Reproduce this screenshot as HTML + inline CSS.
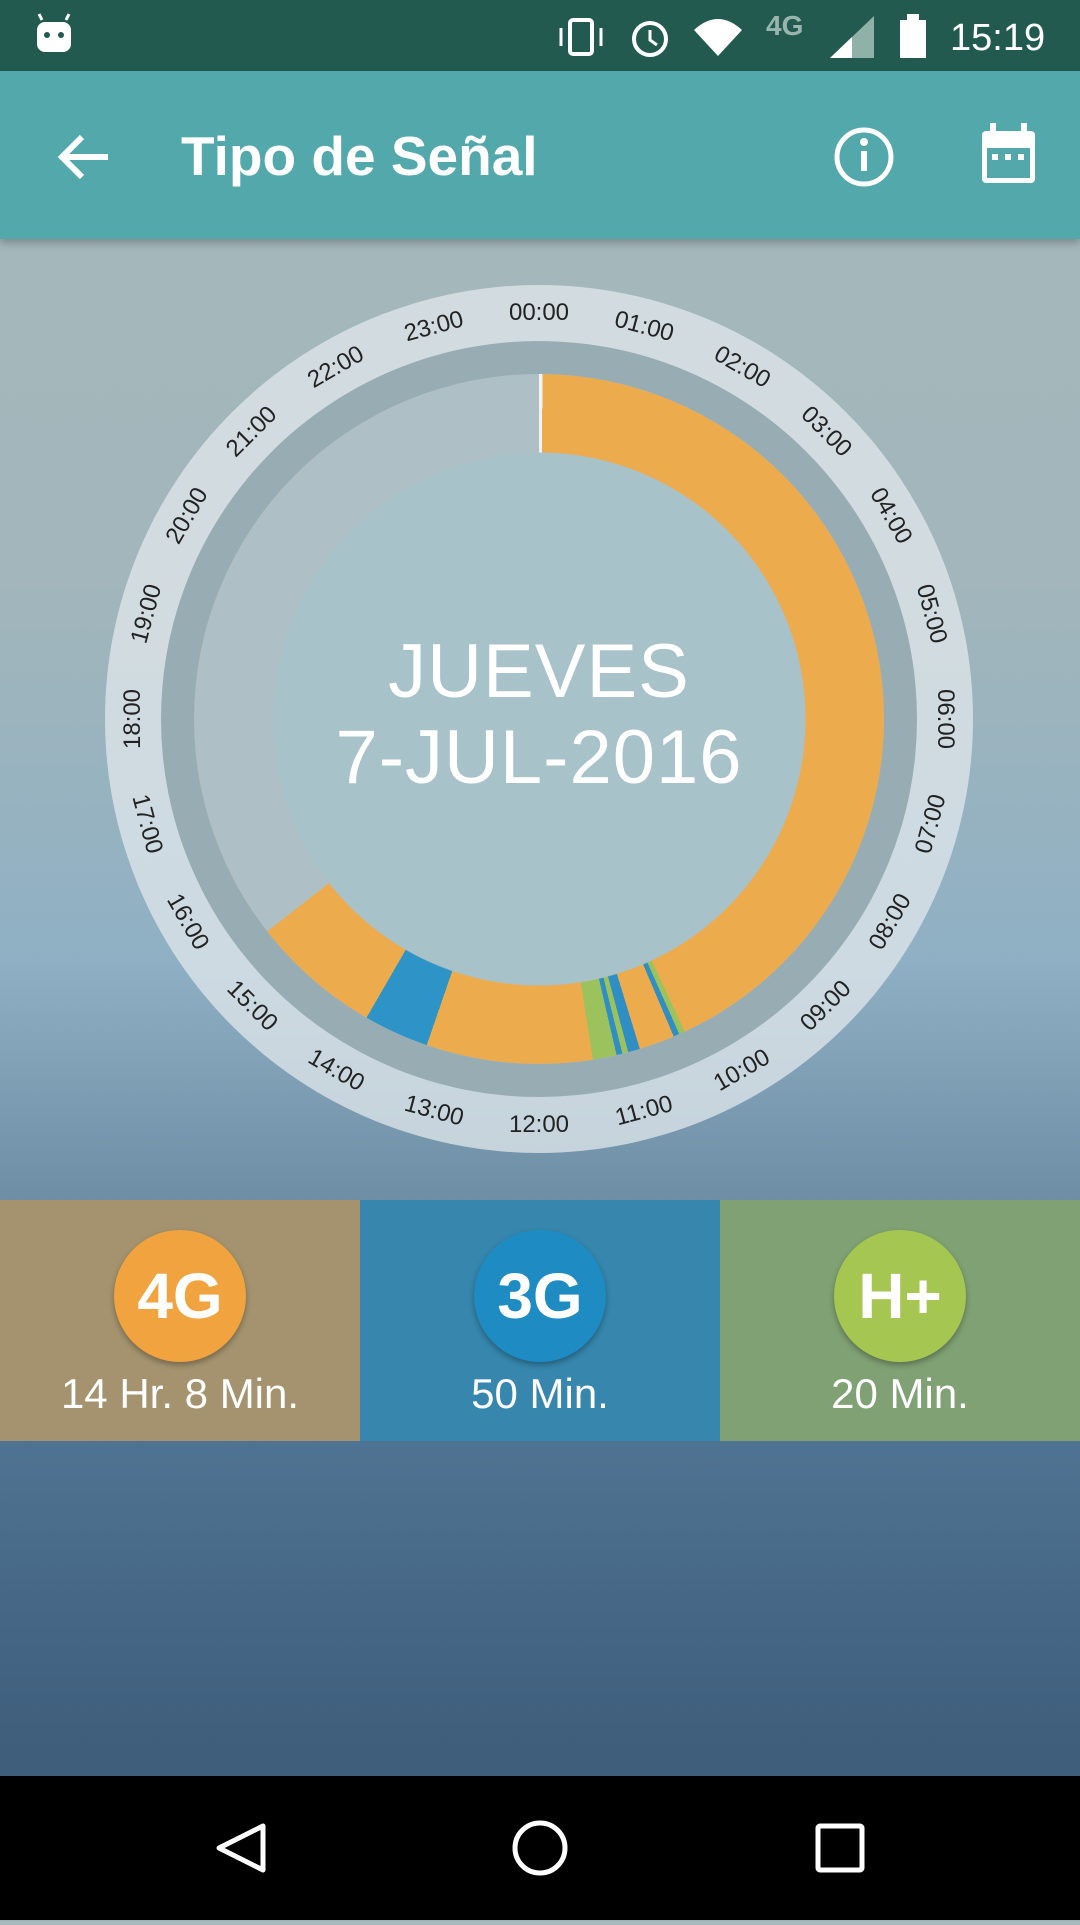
<!DOCTYPE html>
<html><head><meta charset="utf-8"><style>
*{margin:0;padding:0;box-sizing:border-box}
body{width:1080px;height:1920px;overflow:hidden;font-family:"Liberation Sans",sans-serif;position:relative;
background:linear-gradient(180deg,#a6b8ba 0%,#a2b6bb 30%,#8fb0c4 50%,#6f8fa6 62%,#4f7392 75%,#3f5f7d 90%,#3d5a78 100%)}
.status{position:absolute;top:0;left:0;width:1080px;height:71px;background:#225a50;color:#fff}
.bar{position:absolute;top:71px;left:0;width:1080px;height:168px;background:#52a8aa;box-shadow:0 4px 8px rgba(0,0,0,.25)}
.title{position:absolute;left:181px;top:124px;font-size:55px;font-weight:bold;color:#fff}
.dial{position:absolute;left:539px;top:719px;width:0;height:0}
.c{position:absolute;border-radius:50%}
.lbl{position:absolute;left:-40px;top:-14px;width:80px;text-align:center;font-size:24px;color:#222;line-height:28px}
.donut{position:absolute;left:-345px;top:-345px;width:690px;height:690px;border-radius:50%;
background:conic-gradient(#f2f2f2 0deg 0.6deg,#ecab4d 0.6deg 155deg,#9bc25d 155deg 156deg,#2f8fc4 156deg 157deg,#ecab4d 157deg 163deg,#2f8fc4 163deg 165deg,#9bc25d 165deg 166deg,#2f8fc4 166deg 167deg,#9bc25d 167deg 171deg,#ecab4d 171deg 199deg,#2e93c7 199deg 210deg,#ecab4d 210deg 232deg,transparent 232deg 360deg);
-webkit-mask:radial-gradient(circle,transparent 266px,#000 267px);mask:radial-gradient(circle,transparent 266px,#000 267px)}
.tile{position:absolute;top:1200px;width:360px;height:241px;color:#fff;text-align:center}
.badge{position:absolute;left:114px;top:30px;width:132px;height:132px;border-radius:50%;font-size:64px;font-weight:bold;line-height:132px;box-shadow:0 3px 6px rgba(0,0,0,.3)}
.tl{position:absolute;top:170px;width:100%;font-size:42px;font-weight:300}
.nav{position:absolute;top:1776px;left:0;width:1080px;height:144px;background:#000}
</style></head><body>
<div class="status">
 <svg width="1080" height="71" style="position:absolute;left:0;top:0">
  <rect x="37" y="22" width="34" height="30" rx="8" fill="#fff"/><circle cx="47" cy="35" r="3" fill="#225a50"/><circle cx="61" cy="35" r="3" fill="#225a50"/>
  <line x1="42" y1="20" x2="39" y2="14" stroke="#fff" stroke-width="3"/><line x1="66" y1="20" x2="69" y2="14" stroke="#fff" stroke-width="3"/>
  <rect x="570" y="20" width="22" height="34" rx="3" fill="none" stroke="#fff" stroke-width="4"/><line x1="561" y1="28" x2="561" y2="46" stroke="#fff" stroke-width="3"/><line x1="601" y1="28" x2="601" y2="46" stroke="#fff" stroke-width="3"/>
  <circle cx="650" cy="39" r="16" fill="none" stroke="#fff" stroke-width="4"/><path d="M650 30v10l7 5" stroke="#fff" stroke-width="3" fill="none"/>
  <path d="M694 30 Q718 8 742 30 L718 56 Z" fill="#fff"/>
  <text x="766" y="35" font-size="28" font-weight="bold" fill="#9ab5ae">4G</text>
  <path d="M830 58 L874 16 L874 58 Z" fill="#8fb1a8"/><path d="M830 58 L852 37 L852 58 Z" fill="#fff"/>
  <rect x="900" y="20" width="26" height="38" fill="#fff"/><rect x="907" y="14" width="12" height="6" fill="#fff"/>
  <text x="950" y="50" font-size="38" fill="#fff">15:19</text>
 </svg>
</div>
<div class="bar">
 <svg width="1080" height="168" style="position:absolute;left:0;top:0">
  <path d="M108 86H64M82 66L62 86L82 106" stroke="#fff" stroke-width="6" fill="none"/>
  <circle cx="864" cy="86" r="27" fill="none" stroke="#fff" stroke-width="5"/><rect x="861" y="80" width="6" height="20" fill="#fff"/><circle cx="864" cy="71" r="4" fill="#fff"/>
  <rect x="982" y="60" width="53" height="52" rx="4" fill="#fff"/><rect x="987" y="77" width="43" height="30" fill="#52a8aa"/>
  <rect x="990" y="52" width="6" height="12" fill="#fff"/><rect x="1021" y="52" width="6" height="12" fill="#fff"/>
  <rect x="992" y="83" width="6" height="6" fill="#fff"/><rect x="1005" y="83" width="6" height="6" fill="#fff"/><rect x="1018" y="83" width="6" height="6" fill="#fff"/>
 </svg>
</div>
<div class="title">Tipo de Señal</div>
<div class="dial">
 <div class="c" style="left:-434px;top:-434px;width:868px;height:868px;background:rgba(225,232,236,.75)"></div>
 <div class="c" style="left:-378px;top:-378px;width:756px;height:756px;background:#98acb3"></div>
 <div class="c" style="left:-345px;top:-345px;width:690px;height:690px;background:#aec0c5"></div>
 <div class="c" style="left:-266px;top:-266px;width:532px;height:532px;background:#a8c2c9"></div>
 <div class="donut"></div>
 <div id="labels"></div>
 <div style="position:absolute;left:-300px;top:-90px;width:600px;text-align:center;color:#fff;font-weight:300;font-size:76px;line-height:86px;letter-spacing:1px">JUEVES<br>7-JUL-2016</div>
</div>
<div class="tile" style="left:0;background:#a4936e"><div class="badge" style="background:#f0a33e">4G</div><div class="tl">14 Hr. 8 Min.</div></div>
<div class="tile" style="left:360px;background:#3686ad"><div class="badge" style="background:#1e8bc3">3G</div><div class="tl">50 Min.</div></div>
<div class="tile" style="left:720px;background:#80a174"><div class="badge" style="background:#a6c652">H+</div><div class="tl">20 Min.</div></div>
<div class="nav">
 <svg width="1080" height="144">
  <path d="M263 50 L219 72 L263 94 Z" fill="none" stroke="#fff" stroke-width="5" stroke-linejoin="round"/>
  <circle cx="540" cy="72" r="25" fill="none" stroke="#fff" stroke-width="5"/>
  <rect x="818" y="50" width="44" height="44" rx="2" fill="none" stroke="#fff" stroke-width="5"/>
 </svg>
</div>
<script>
var h='';for(var i=0;i<24;i++){var a=i*15,t=(i<10?'0':'')+i+':00',tr;
if(a>90&&a<270)tr='rotate('+(a-180)+'deg) translateY(406px)';else tr='rotate('+a+'deg) translateY(-406px)';
h+='<div class="lbl" style="transform:'+tr+'">'+t+'</div>';}
document.getElementById('labels').innerHTML=h;
</script>
</body></html>
